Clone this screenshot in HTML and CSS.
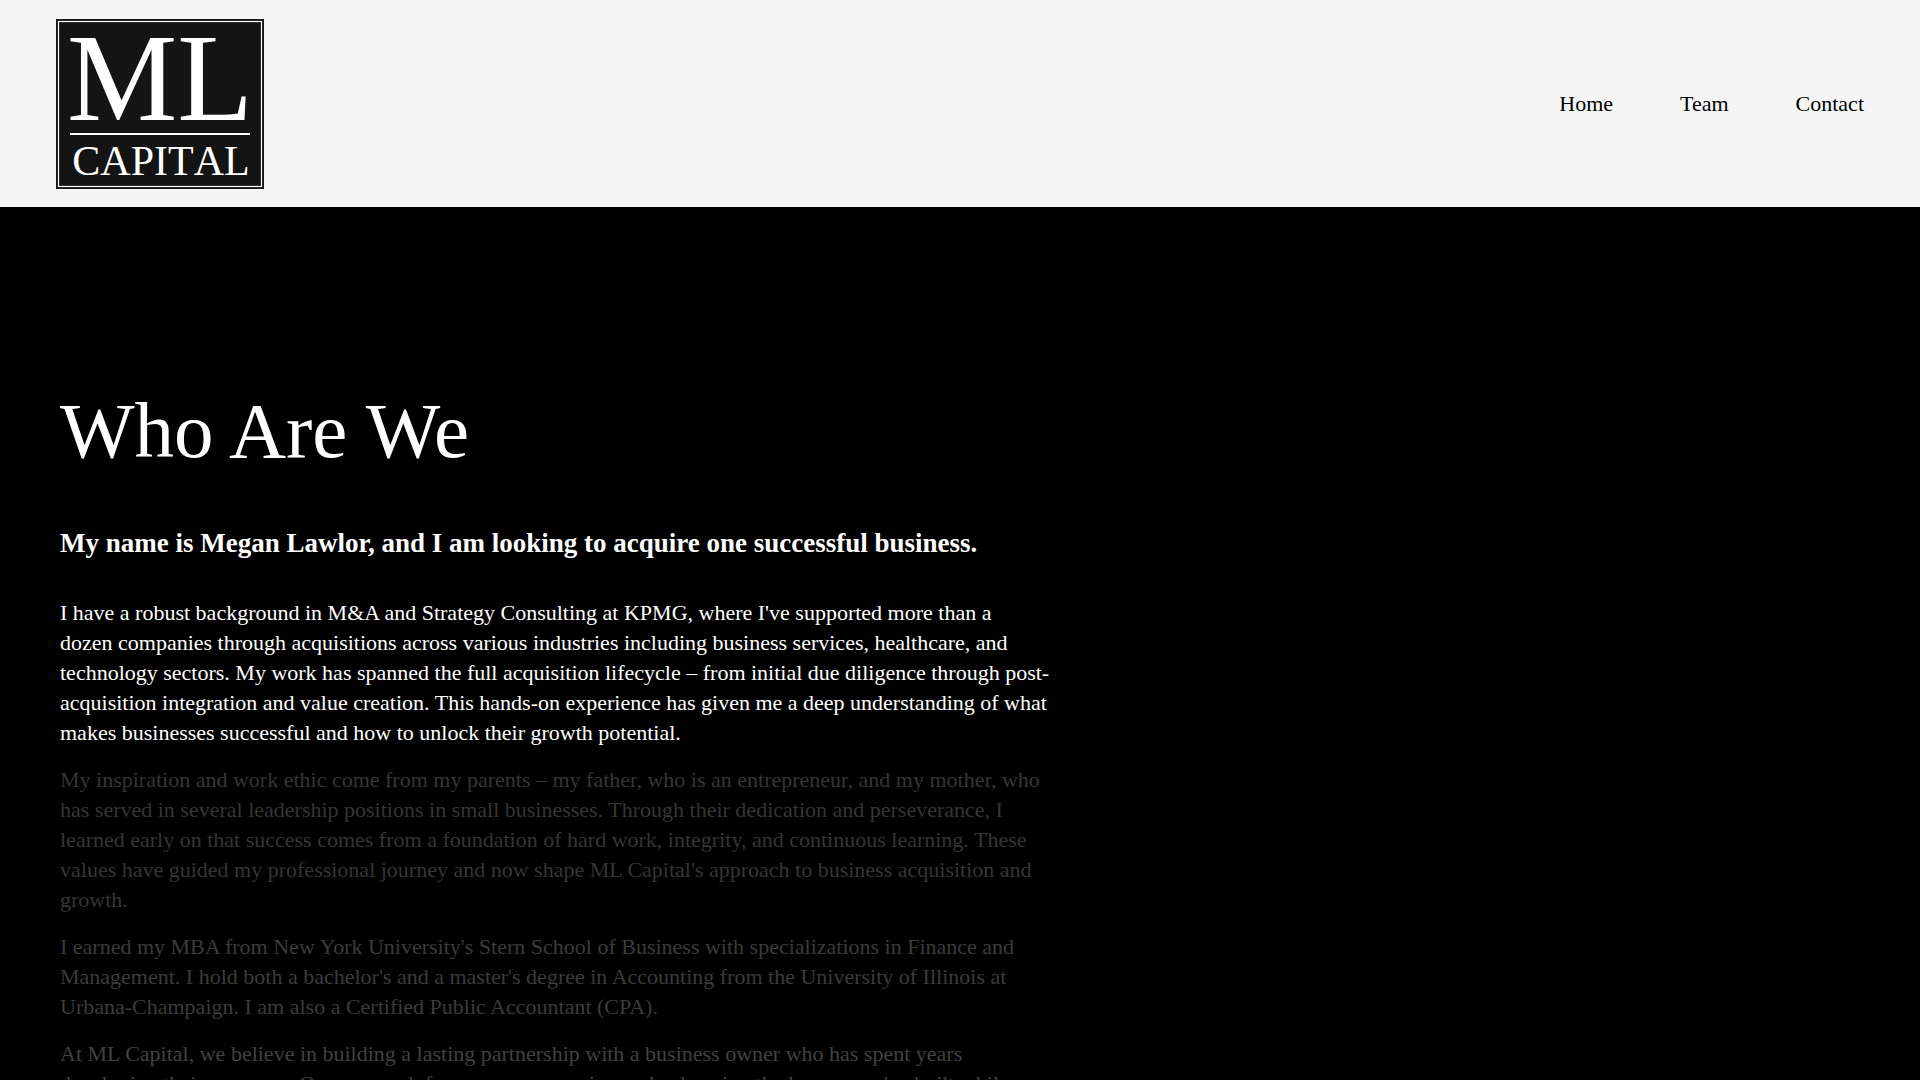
FILE: index.html
```html
<!DOCTYPE html>
<html lang="en">
<head>
    <meta charset="UTF-8">
    <meta name="viewport" content="width=device-width, initial-scale=1.0">
    <title>ML Capital</title>
    <link rel="stylesheet" href="styles.css">
</head>
<body>
    <header class="header">
        <a href="#" class="logo" aria-label="ML Capital">
            <svg width="208" height="170" viewBox="0 0 208 170">
                <rect width="208" height="170" fill="#141414"/>
                <rect x="2.5" y="2.5" width="203" height="165" fill="none" stroke="#fff" stroke-width="1.2"/>
                <text class="logo-initials" x="104" y="101">ML</text>
                <rect x="14" y="114" width="180" height="2" fill="#fff"/>
                <text class="logo-name" x="105" y="156">CAPITAL</text>
            </svg>
        </a>
        <nav class="nav">
            <a href="#">Home</a>
            <a href="#">Team</a>
            <a href="#">Contact</a>
        </nav>
    </header>

    <main class="about">
        <div class="about-text">
            <h1>Who Are We</h1>
            <h2>My name is Megan Lawlor, and I am looking to acquire one successful business.</h2>
            <p>I have a robust background in M&amp;A and Strategy Consulting at KPMG, where I've supported more than a<br> dozen companies through acquisitions across various industries including business services, healthcare, and technology sectors. My work has spanned the full acquisition lifecycle – from initial due diligence through post-acquisition integration and value creation. This hands-on experience has given me a deep understanding of what makes businesses successful and how to unlock their growth potential.</p>
            <p class="fade-1">My inspiration and work ethic come from my parents – my father, who is an entrepreneur, and my mother, who has served in several leadership positions in small businesses. Through their dedication and perseverance, I learned early on that success comes from a foundation of hard work, integrity, and continuous learning. These values have guided my professional journey and now shape ML Capital's approach to business acquisition and growth.</p>
            <p class="fade-2">I earned my MBA from New York University's Stern School of Business with specializations in Finance and Management. I hold both a bachelor's and a master's degree in Accounting from the University of Illinois at Urbana-Champaign. I am also a Certified Public Accountant (CPA).</p>
            <p class="fade-3">At ML Capital, we believe in building a lasting partnership with a business owner who has spent years developing their company. Our approach focuses on preserving and enhancing the legacy you've built while</p>
        </div>
    </main>
</body>
</html>
```
FILE: styles.css
```css
* {
    box-sizing: border-box;
}
body {
    margin: 0;
    background-color: #000;
    color: #fff;
    font-family: "Liberation Serif", "Times New Roman", serif;
    font-size: 22px;
    line-height: 30px;
}
.header {
    display: flex;
    align-items: center;
    justify-content: space-between;
    padding: 19px 56px 18px;
    background-color: #f5f5f5;
}
.logo svg {
    display: block;
}
.logo-initials,
.logo-name {
    fill: #fff;
    text-anchor: middle;
}
.logo-initials {
    font-size: 124px;
}
.logo-name {
    font-size: 42px;
    font-kerning: none;
}
.nav {
    display: flex;
    gap: 67px;
}
.nav a {
    color: #000;
    text-decoration: none;
}
.about {
    padding: 176px 60px 60px;
}
.about-text {
    width: 55%;
}
h1 {
    margin: 0;
    font-size: 79px;
    font-weight: normal;
    line-height: 96px;
}
h2 {
    margin: 46px 0 37px;
    font-size: 27px;
    line-height: 36px;
}
p {
    margin: 0 0 17px;
}
.fade-1 {
    color: #353535;
}
.fade-2 {
    color: #3b3b3b;
}
.fade-3 {
    color: #414141;
}
```
